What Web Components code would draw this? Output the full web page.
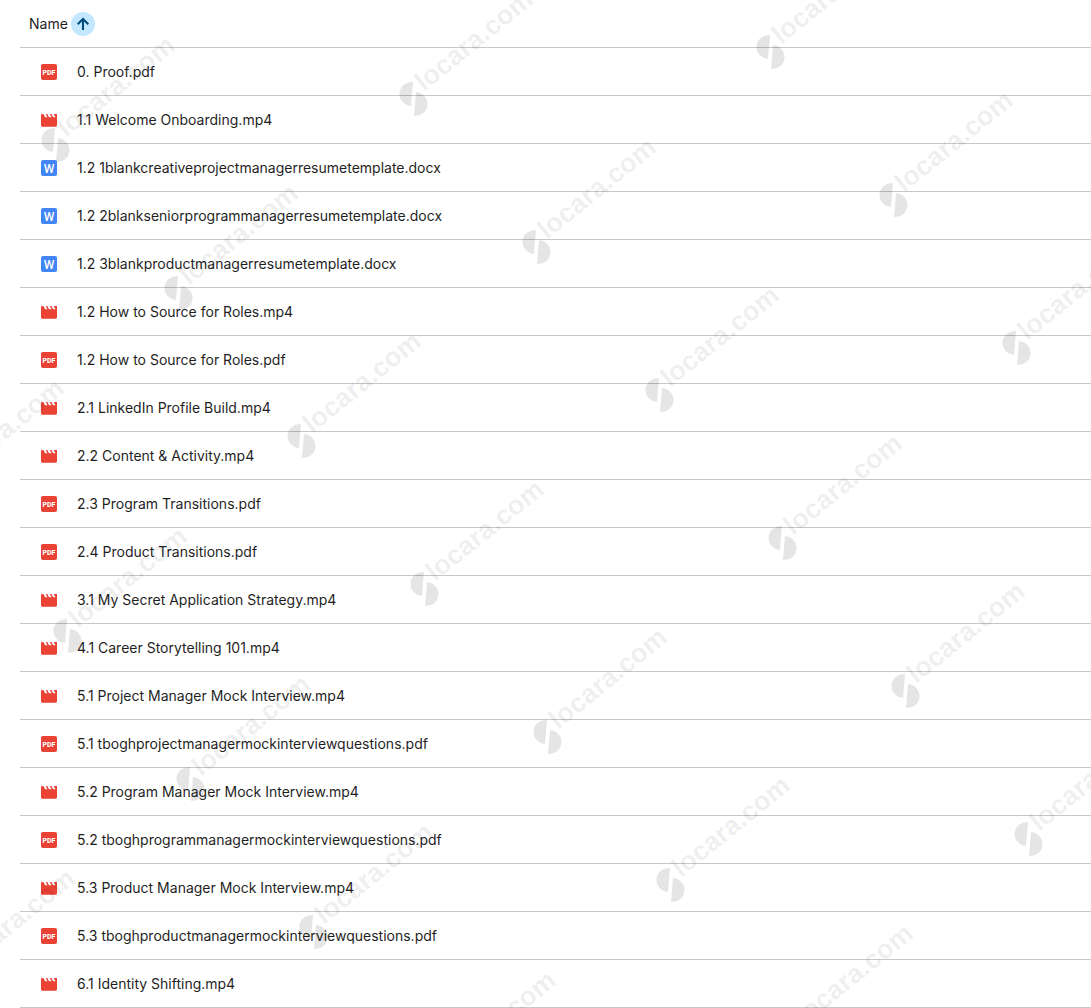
<!DOCTYPE html>
<html lang="en">
<head>
<meta charset="utf-8">
<meta name="viewport" content="width=device-width, initial-scale=1">
<title>Files</title>
<style>
  body {
    margin: 0;
    background: #fff;
    color: #1f1f1f;
    font-family: Inter, Roboto, sans-serif;
    font-size: 14px;
    line-height: 20px;
  }
</style>
</head>
<body>
<drive-page></drive-page>

<script>
const FILES = [
  ["pdf", "0. Proof.pdf"],
  ["video", "1.1 Welcome Onboarding.mp4"],
  ["word", "1.2 1blankcreativeprojectmanagerresumetemplate.docx"],
  ["word", "1.2 2blankseniorprogrammanagerresumetemplate.docx"],
  ["word", "1.2 3blankproductmanagerresumetemplate.docx"],
  ["video", "1.2 How to Source for Roles.mp4"],
  ["pdf", "1.2 How to Source for Roles.pdf"],
  ["video", "2.1 LinkedIn Profile Build.mp4"],
  ["video", "2.2 Content & Activity.mp4"],
  ["pdf", "2.3 Program Transitions.pdf"],
  ["pdf", "2.4 Product Transitions.pdf"],
  ["video", "3.1 My Secret Application Strategy.mp4"],
  ["video", "4.1 Career Storytelling 101.mp4"],
  ["video", "5.1 Project Manager Mock Interview.mp4"],
  ["pdf", "5.1 tboghprojectmanagermockinterviewquestions.pdf"],
  ["video", "5.2 Program Manager Mock Interview.mp4"],
  ["pdf", "5.2 tboghprogrammanagermockinterviewquestions.pdf"],
  ["video", "5.3 Product Manager Mock Interview.mp4"],
  ["pdf", "5.3 tboghproductmanagermockinterviewquestions.pdf"],
  ["video", "6.1 Identity Shifting.mp4"],
];

const ICONS = {
  pdf: `
    <rect width="16" height="16" rx="2" fill="#ea4335"/>
    <text x="8" y="10.500" text-anchor="middle" font-size="7" font-weight="800" fill="#fff">PDF</text>`,
  word: `
    <rect width="16" height="16" rx="2" fill="#4285f4"/>
    <text x="8" y="12.500" text-anchor="middle" font-size="12" font-weight="500" fill="#fff">W</text>`,
  video: `
    <path transform="translate(-1.6 -1.2) scale(.8)" fill="#ea4335"
      d="M18 4l2 4h-3l-2-4h-2l2 4h-3l-2-4H8l2 4H7L5 4H3.2C2.5 4 2 4.5 2 5.200V18c0 1.100.9 2 2 2h16c1.100 0 2-.9 2-2V4h-4z"/>`,
};

class FileIcon extends HTMLElement {
  constructor() {
    super();
    this.attachShadow({ mode: "open" });
  }

  connectedCallback() {
    this.shadowRoot.innerHTML = `
      <style>
        :host {
          display: block;
          flex: none;
          width: 16px;
          height: 16px;
        }

        svg {
          display: block;
          width: 100%;
          height: 100%;
          font-family: Roboto, sans-serif;
        }
      </style>
      <svg viewBox="0 0 16 16" aria-hidden="true">${ICONS[this.getAttribute("type")] ?? ""}</svg>
    `;
  }
}

class SortHeader extends HTMLElement {
  constructor() {
    super();
    this.attachShadow({ mode: "open" });
    this.shadowRoot.innerHTML = `
      <style>
        :host {
          display: flex;
          align-items: center;
          gap: 3px;
          height: 47px;
        }

        button {
          display: flex;
          align-items: center;
          justify-content: center;
          width: 24px;
          height: 24px;
          padding: 0;
          border: 0;
          border-radius: 50%;
          background: #c2e7ff;
          color: #004a77;
          cursor: pointer;
        }
      </style>
      <slot></slot>
      <button type="button" aria-label="Reverse sort direction">
        <svg width="16" height="16" viewBox="0 0 16 16" fill="none" stroke="currentColor" stroke-width="2" aria-hidden="true">
          <path d="M8 14V3M2.700 8.300L8 3l5.300 5.300"/>
        </svg>
      </button>
    `;
  }
}

class FileList extends HTMLElement {
  constructor() {
    super();
    this.attachShadow({ mode: "open" });
  }

  set files(value) {
    this._files = value;
    this.render();
  }

  get files() {
    return this._files;
  }

  render() {
    this.shadowRoot.innerHTML = `
      <style>
        :host {
          display: block;
          padding-left: 20px;
        }

        table {
          width: 100%;
          border-collapse: separate;
          border-spacing: 0;
        }

        th,
        td {
          padding: 0;
          border-bottom: 1px solid #c7c7c7;
          font-weight: 400;
          text-align: left;
          white-space: nowrap;
        }

        th {
          padding-left: 9px;
        }

        .file {
          display: flex;
          align-items: center;
          gap: 20px;
          height: 47px;
          padding-left: 21px;
        }
      </style>
      <table>
        <thead>
          <tr><th scope="col" aria-sort="ascending"><sort-header>Name</sort-header></th></tr>
        </thead>
        <tbody></tbody>
      </table>
    `;

    const body = this.shadowRoot.querySelector("tbody");
    for (const [type, name] of this._files) {
      const cell = body.insertRow().insertCell();
      cell.innerHTML = `<div class="file"><file-icon type="${type}"></file-icon><span></span></div>`;
      cell.querySelector("span").textContent = name;
    }
  }
}

// Slanted marks repeated on a skewed lattice over the whole page
class PageWatermark extends HTMLElement {
  constructor() {
    super();
    this.attachShadow({ mode: "open" });
  }

  connectedCallback() {
    const label = this.getAttribute("label");
    let marks = "";
    for (let row = 0; row < 7; row++) {
      for (let col = -2; col < 3; col++) {
        const x = Math.round(56 + col * 357.5 + row * 123);
        const y = Math.round(145 - col * 46.5 + row * 148);
        if (x < -140 || x > 1091 || y < -20 || y > 1120) continue;
        marks += `
          <g transform="translate(${x} ${y})">
            <path d="M-1-17L-3 7A12.500 12 0 0 1-1-17zM2-7L0 17A12.500 12 0 0 0 2-7z"/>
            <text transform="translate(10 -7) rotate(-39)">${label}</text>
          </g>`;
      }
    }

    this.shadowRoot.innerHTML = `
      <style>
        :host {
          display: block;
          position: absolute;
          inset: 0;
          overflow: hidden;
          pointer-events: none;
        }

        svg {
          display: block;
          width: 100%;
          height: 100%;
          font: bold 27px "Liberation Sans", Arial, sans-serif;
        }

        path {
          fill: rgba(0, 0, 0, 0.1);
        }

        text {
          fill: rgba(0, 0, 0, 0.08);
        }
      </style>
      <svg aria-hidden="true">${marks}</svg>
    `;
  }
}

class DrivePage extends HTMLElement {
  constructor() {
    super();
    this.attachShadow({ mode: "open" });
    this.shadowRoot.innerHTML = `
      <style>
        :host {
          display: block;
          position: relative;
        }
      </style>
      <file-list></file-list>
      <page-watermark label="locara.com"></page-watermark>
    `;
  }

  connectedCallback() {
    this.shadowRoot.querySelector("file-list").files = FILES;
  }
}

customElements.define("file-icon", FileIcon);
customElements.define("sort-header", SortHeader);
customElements.define("file-list", FileList);
customElements.define("page-watermark", PageWatermark);
customElements.define("drive-page", DrivePage);
</script>
</body>
</html>
